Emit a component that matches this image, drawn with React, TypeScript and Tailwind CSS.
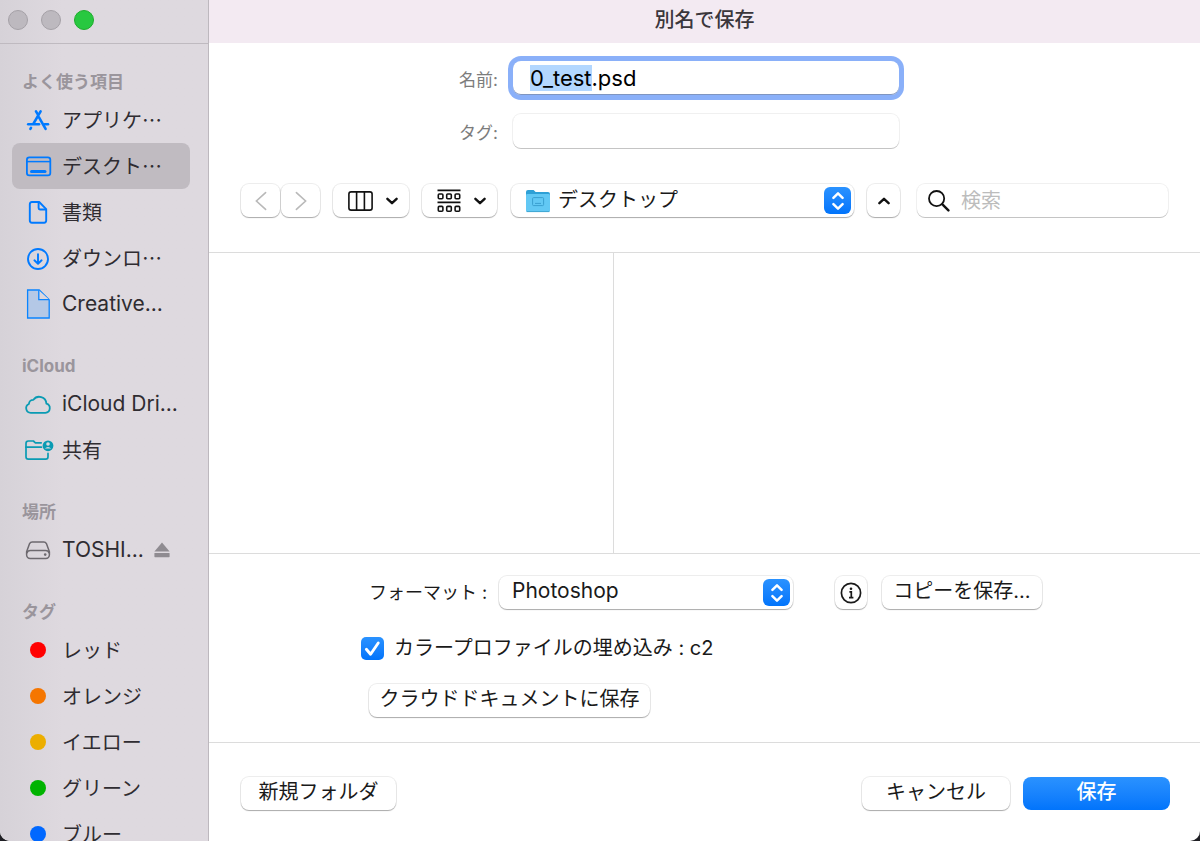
import { useEffect, useRef, type ReactNode } from 'react';

interface SidebarItem {
  label: string;
  icon: ReactNode;
  latin?: boolean;
  selected?: boolean;
  ejectable?: boolean;
}

interface SidebarSection {
  title: string;
  items: SidebarItem[];
}

const jp = "font-['Noto_Sans_CJK_JP',sans-serif]";
const ui = "font-['Inter','Noto_Sans_CJK_JP',sans-serif]";

const controlShadow =
  'rounded-lg bg-white shadow-[0_0_0_1px_rgba(0,0,0,0.07),0_1px_1px_rgba(0,0,0,0.28)]';
const fieldShadow =
  'rounded-lg bg-white shadow-[0_0_0_1px_rgba(0,0,0,0.06),0_1px_0_rgba(0,0,0,0.18)]';

function AppsIcon() {
  return (
    <svg viewBox="0 0 28 30" className="w-7 h-[30px]" fill="none" stroke="#007aff" strokeWidth="2.6" strokeLinecap="round">
      <path d="M12 6.4 L13.8 9.4" />
      <path d="M16.6 6.4 L9.6 18.4" />
      <path d="M15 12.4 L21.6 23.8" />
      <path d="M4.2 19.2 H15" />
      <path d="M20.6 19.2 H24" />
      <path d="M7 22.8 L6.4 23.8" />
    </svg>
  );
}

function DesktopIcon() {
  return (
    <svg viewBox="0 0 28 30" className="w-7 h-[30px]" fill="none" stroke="#007aff" strokeWidth="1.8">
      <rect x="2.9" y="6.4" width="23.4" height="18" rx="2.4" />
      <path d="M3 10.6 H26" strokeWidth="1.5" />
      <path d="M7.5 20.4 H21" strokeWidth="3" strokeLinecap="round" />
    </svg>
  );
}

function DocumentIcon() {
  return (
    <svg viewBox="0 0 28 30" className="w-7 h-[30px]" fill="none" stroke="#007aff" strokeWidth="1.9" strokeLinejoin="round">
      <path d="M8 5 H15.2 L22.2 12.1 V23.5 A2.3 2.3 0 0 1 20 25.8 H8 A2.3 2.3 0 0 1 5.8 23.5 V7.3 A2.3 2.3 0 0 1 8 5 Z" />
      <path d="M14.6 5.3 V11.1 Q14.6 12.5 16 12.5 H22" />
    </svg>
  );
}

function DownloadIcon() {
  return (
    <svg viewBox="0 0 28 30" className="w-7 h-[30px]" fill="none" stroke="#007aff" strokeWidth="1.9" strokeLinecap="round" strokeLinejoin="round">
      <circle cx="14" cy="16" r="10" />
      <path d="M14 11.1 V20.5 M10.4 17.3 L14 20.8 L17.6 17.3" />
    </svg>
  );
}

function FileIcon() {
  return (
    <svg viewBox="0 0 28 30" className="w-7 h-[30px]" fill="#b4c8e6" stroke="#0a84ff" strokeWidth="1.3">
      <path d="M3.6 1 H15.2 L25.2 10.8 V29 H3.6 Z" />
      <path d="M14.8 1.2 V10.6 H25" fill="#dcd8de" />
    </svg>
  );
}

function CloudIcon() {
  return (
    <svg viewBox="0 0 28 30" className="w-7 h-[30px]" fill="none" stroke="#0a9bb3" strokeWidth="1.8" strokeLinejoin="round">
      <path d="M6.8 23.8 H21.4 A4.7 4.7 0 0 0 22.4 14.6 A7.2 7.2 0 0 0 9.4 10.8 A4.4 4.4 0 0 0 4.9 15 A4.6 4.6 0 0 0 6.8 23.8 Z" />
    </svg>
  );
}

function SharedIcon() {
  return (
    <svg viewBox="0 0 30 30" className="w-[30px] h-[30px] -mr-0.5 shrink-0" fill="none" stroke="#0a9bb3" strokeWidth="1.7" strokeLinejoin="round" strokeLinecap="round">
      <path d="M17.2 7.8 H11.4 L9.4 6 H4.4 A2.4 2.4 0 0 0 2 8.4 V21.8 A2.4 2.4 0 0 0 4.4 24.2 H21.6 A2.4 2.4 0 0 0 24 21.8 V18.4" />
      <path d="M2 12.2 H17.4" />
      <circle cx="24" cy="10.8" r="5.4" fill="#0a9bb3" stroke="none" />
      <circle cx="24" cy="9" r="1.8" fill="#dcd8de" stroke="none" />
      <path d="M20.8 13.6 Q24 10.2 27.2 13.6 Z" fill="#dcd8de" stroke="none" />
    </svg>
  );
}

function DiskIcon() {
  return (
    <svg viewBox="0 0 28 30" className="w-7 h-[30px]" fill="none" stroke="#6d696f" strokeWidth="1.5" strokeLinejoin="round">
      <path d="M8.2 7 H19.8 Q21.6 7 22.4 8.6 L25.4 16.8 V19.8 A3.6 3.6 0 0 1 21.8 23.4 H6.2 A3.6 3.6 0 0 1 2.6 19.8 V16.8 L5.6 8.6 Q6.4 7 8.2 7 Z" />
      <path d="M2.8 18.2 Q3.6 15.6 6.4 15.6 H21.6 Q24.4 15.6 25.2 18.2" />
      <circle cx="21.2" cy="19.6" r="1.3" fill="#6d696f" stroke="none" />
    </svg>
  );
}

function EjectIcon() {
  return (
    <svg viewBox="0 0 16 16" className="ml-auto mr-5 w-4 h-4" fill="#8f8b91">
      <path d="M8 0.5 L15.6 9.5 H0.4 Z" />
      <rect x="0.4" y="11" width="15.2" height="4.2" rx="0.6" />
    </svg>
  );
}

function Chevron({ className = '' }: { className?: string }) {
  return (
    <svg viewBox="0 0 12 8" className={`w-3 h-2 ${className}`} fill="none" stroke="#111" strokeWidth="2.4" strokeLinecap="round" strokeLinejoin="round">
      <path d="M1.4 1.8 L6 6.2 L10.6 1.8" />
    </svg>
  );
}

function Stepper() {
  return (
    <span className="pointer-events-none absolute right-[3px] top-[3px] flex w-[27px] h-[27px] items-center justify-center rounded-md bg-gradient-to-b from-[#2a92ff] to-[#0174fb]">
      <svg viewBox="0 0 14 20" className="w-3.5 h-5" fill="none" stroke="#fff" strokeWidth="2.5" strokeLinecap="round" strokeLinejoin="round">
        <path d="M2.4 6.8 L7 2.4 L11.6 6.8" />
        <path d="M2.4 13.2 L7 17.6 L11.6 13.2" />
      </svg>
    </span>
  );
}

function FolderIcon() {
  return (
    <svg viewBox="0 0 26 24" className="pointer-events-none absolute left-3.5 top-[5px] w-[26px] h-6">
      <path d="M1 3 Q1 1 3 1 H8.6 L10.6 3 H23 Q25 3 25 5 V8 H1 Z" fill="#2ea0d6" />
      <rect x="1" y="5" width="24" height="18" rx="1.4" fill="#62c8f4" />
      <path d="M1.6 22.6 H24.4" stroke="#3fa6d2" strokeWidth="1" />
      <rect x="7.6" y="8.6" width="11" height="8" rx="1" fill="none" stroke="#3a9fd0" />
      <path d="M10 14.4 H16" stroke="#3a9fd0" />
    </svg>
  );
}

function TagDot({ className }: { className: string }) {
  return <span className={`w-4 h-4 rounded-full ${className}`} />;
}

const sections: SidebarSection[] = [
  {
    title: 'よく使う項目',
    items: [
      { label: 'アプリケ…', icon: <AppsIcon /> },
      { label: 'デスクト…', icon: <DesktopIcon />, selected: true },
      { label: '書類', icon: <DocumentIcon /> },
      { label: 'ダウンロ…', icon: <DownloadIcon /> },
      { label: 'Creative...', icon: <FileIcon />, latin: true },
    ],
  },
  {
    title: 'iCloud',
    items: [
      { label: 'iCloud Dri...', icon: <CloudIcon />, latin: true },
      { label: '共有', icon: <SharedIcon /> },
    ],
  },
  {
    title: '場所',
    items: [{ label: 'TOSHI...', icon: <DiskIcon />, latin: true, ejectable: true }],
  },
  {
    title: 'タグ',
    items: [
      { label: 'レッド', icon: <TagDot className="bg-[#ff0000]" /> },
      { label: 'オレンジ', icon: <TagDot className="bg-[#f57600]" /> },
      { label: 'イエロー', icon: <TagDot className="bg-[#ecae00]" /> },
      { label: 'グリーン', icon: <TagDot className="bg-[#00b300]" /> },
      { label: 'ブルー', icon: <TagDot className="bg-[#0068ff]" /> },
    ],
  },
];

function Sidebar() {
  return (
    <aside className="flex w-[209px] shrink-0 flex-col overflow-hidden border-r border-[#bdb8be] bg-gradient-to-r from-[#d6d2d8] to-[#ded9df] to-30%">
      <div className="flex h-11 shrink-0 items-start gap-[13px] border-b border-[#bfbac0] pl-2 pt-2.5">
        <button aria-label="閉じる" className="w-5 h-5 rounded-full border border-[#a5a1a7] bg-[#bdb9bf]" />
        <button aria-label="しまう" className="w-5 h-5 rounded-full border border-[#a5a1a7] bg-[#bdb9bf]" />
        <button aria-label="拡大" className="w-5 h-5 rounded-full border border-[#1eac2c] bg-[#28c840]" />
      </div>
      <nav className="-mt-px">
        {sections.map((section) => (
          <section key={section.title}>
            <h2 className={`flex h-[54px] items-end pb-[3px] pl-[22px] text-[17px] font-bold leading-6 text-[#9a959c] ${ui}`}>
              {section.title}
            </h2>
            <ul>
              {section.items.map((item) => (
                <li key={item.label} className="flex items-center">
                  <button
                    className={`ml-3 mr-[18px] flex h-[46px] flex-1 items-center gap-2.5 rounded-lg pl-3 text-left text-[#2f2c31] ${
                      item.selected ? 'bg-[#c0bbc1]' : ''
                    }`}
                  >
                    <span className="flex w-7 shrink-0 items-center justify-center">{item.icon}</span>
                    <span className={`whitespace-nowrap leading-7 ${item.latin ? `text-[21px] ${ui}` : `text-[20px] ${jp}`}`}>
                      {item.label}
                    </span>
                    {item.ejectable && <EjectIcon />}
                  </button>
                </li>
              ))}
            </ul>
          </section>
        ))}
      </nav>
    </aside>
  );
}

function NameFields() {
  const nameRef = useRef<HTMLInputElement>(null);

  // Select the base name and leave the extension alone
  useEffect(() => {
    const input = nameRef.current;
    if (!input) return;
    input.focus();
    input.setSelectionRange(0, input.value.lastIndexOf('.'));
  }, []);

  return (
    <div className="grid grid-cols-[1fr_386px_1fr] items-center gap-x-[15px] gap-y-[19px] pl-[3px] pt-[18px]">
      <label htmlFor="name" className="pt-[3px] text-right text-[17px] leading-6 text-[#7c7c7c]">
        名前:
      </label>
      <input
        id="name"
        ref={nameRef}
        defaultValue="0_test.psd"
        className="h-[34px] rounded-lg bg-white pl-[17px] text-[22px] leading-7 text-black shadow-[0_0_0_5px_#8ab0f9,inset_0_-1px_0_#7f95c0] outline-none selection:bg-[#b3d7ff] selection:text-black"
      />
      <span />
      <label htmlFor="tags" className="pt-[3px] text-right text-[17px] leading-6 text-[#7c7c7c]">
        タグ:
      </label>
      <input id="tags" className={`h-[34px] px-4 text-xl outline-none ${fieldShadow}`} />
    </div>
  );
}

function Toolbar() {
  return (
    <div className="mt-9 flex h-[33px] items-center pl-8 pr-8">
      <button aria-label="戻る" className={`flex h-full w-[39px] items-center justify-center ${controlShadow}`}>
        <svg viewBox="0 0 12 20" className="w-3 h-5" fill="none" stroke="#b9b9b9" strokeWidth="1.6" strokeLinecap="round">
          <path d="M10.6 1.6 L1.4 10 L10.6 18.4" />
        </svg>
      </button>
      <button aria-label="進む" className={`ml-px flex h-full w-[39px] items-center justify-center ${controlShadow}`}>
        <svg viewBox="0 0 12 20" className="w-3 h-5" fill="none" stroke="#b9b9b9" strokeWidth="1.6" strokeLinecap="round">
          <path d="M1.4 1.6 L10.6 10 L1.4 18.4" />
        </svg>
      </button>
      <button aria-label="表示" className={`ml-[13px] flex h-full w-[76px] items-center justify-between pl-[15px] pr-[11px] ${controlShadow}`}>
        <svg viewBox="0 0 25 20" className="w-[25px] h-5" fill="none" stroke="#111" strokeWidth="1.6">
          <rect x="0.9" y="0.9" width="23.2" height="18.2" rx="2.2" />
          <path d="M8.6 1 V19 M16.4 1 V19" />
        </svg>
        <Chevron />
      </button>
      <button aria-label="グループ" className={`ml-[13px] flex h-full w-[75px] items-center justify-between pl-[15px] pr-[11px] ${controlShadow}`}>
        <svg viewBox="0 0 24 24" className="w-6 h-6" fill="none" stroke="#111" strokeWidth="1.6">
          <path d="M0.5 1.4 H23.5 M0.5 13.4 H23.5" />
          <rect x="1.3" y="5" width="4.6" height="4.8" rx="1" />
          <rect x="9.7" y="5" width="4.6" height="4.8" rx="1" />
          <rect x="18.1" y="5" width="4.6" height="4.8" rx="1" />
          <rect x="1.3" y="17.4" width="4.6" height="4.8" rx="1" />
          <rect x="9.7" y="17.4" width="4.6" height="4.8" rx="1" />
          <rect x="18.1" y="17.4" width="4.6" height="4.8" rx="1" />
        </svg>
        <Chevron />
      </button>
      <div className={`relative ml-[14px] h-full w-[343px] ${controlShadow}`}>
        <FolderIcon />
        <select aria-label="場所" className={`h-full w-full appearance-none bg-transparent pb-[3px] pl-[47px] text-xl leading-7 text-[#1a1a1a] outline-none ${jp}`}>
          <option>デスクトップ</option>
        </select>
        <Stepper />
      </div>
      <button aria-label="折りたたむ" className={`ml-[13px] flex h-full w-[33px] items-center justify-center ${controlShadow}`}>
        <Chevron className="rotate-180" />
      </button>
      <div className={`relative ml-[17px] h-full min-w-0 flex-1 ${fieldShadow}`}>
        <svg viewBox="0 0 22 22" className="pointer-events-none absolute left-[11px] top-1.5 w-[22px] h-[22px]" fill="none" stroke="#111" strokeLinecap="round">
          <circle cx="8.6" cy="8.6" r="7.6" strokeWidth="1.8" />
          <path d="M14.4 14.4 L20.4 20.4" strokeWidth="2.4" />
        </svg>
        <input
          type="search"
          aria-label="検索"
          placeholder="検索"
          className="h-full w-full bg-transparent pl-11 pr-3 text-xl leading-7 outline-none placeholder:text-[#bcbcbc]"
        />
      </div>
    </div>
  );
}

function FormatOptions() {
  return (
    <div className="flex flex-col items-start border-b border-[#dcdcdc] pb-[25px] pl-[152px] pt-[22px] text-xl leading-7 text-[#1a1a1a]">
      <div className="flex items-center pl-2">
        <label htmlFor="format" className="w-[130px] text-lg leading-6">
          フォーマット :
        </label>
        <div className={`relative h-[33px] w-[294px] ${controlShadow}`}>
          <select id="format" className="h-full w-full appearance-none bg-transparent pb-[3px] pl-[13px] text-[21px] leading-7 outline-none">
            <option>Photoshop</option>
          </select>
          <Stepper />
        </div>
        <button aria-label="情報" className={`ml-[42px] flex w-8 h-[33px] items-center justify-center ${controlShadow}`}>
          <svg viewBox="0 0 22 22" className="w-[22px] h-[22px]" fill="none" stroke="#1a1a1a" strokeWidth="1.7">
            <circle cx="11" cy="11" r="9.6" />
            <circle cx="11" cy="6.8" r="1.3" fill="#1a1a1a" stroke="none" />
            <path d="M9.4 9.8 H11.3 V15.4 M9 15.6 H13.4" />
          </svg>
        </button>
        <button className={`ml-[15px] h-[33px] w-40 pb-[3px] ${controlShadow}`}>コピーを保存...</button>
      </div>
      <label className="mt-[25px] flex items-center gap-2.5">
        <span className="relative flex">
          <input
            type="checkbox"
            defaultChecked
            className="h-[23px] w-[23px] appearance-none rounded-[5px] bg-gradient-to-b from-[#2a92ff] to-[#0174fb]"
          />
          <svg viewBox="0 0 24 24" className="pointer-events-none absolute inset-0 h-[23px] w-[23px]" fill="none" stroke="#fff" strokeWidth="3" strokeLinecap="round" strokeLinejoin="round">
            <path d="M5.6 12.8 L10 18 L18 6.2" />
          </svg>
        </span>
        カラープロファイルの埋め込み : c2
      </label>
      <button className={`ml-2 mt-[22px] h-[33px] w-[281px] pb-[3px] ${controlShadow}`}>クラウドドキュメントに保存</button>
    </div>
  );
}

function FooterButtons() {
  return (
    <div className="flex h-[98px] shrink-0 items-start pl-8 pr-[30px] pt-[34px] text-xl leading-7 text-[#1a1a1a]">
      <button className={`h-[33px] w-[155px] pb-[3px] ${controlShadow}`}>新規フォルダ</button>
      <button className={`ml-auto h-[33px] w-[148px] pb-[3px] ${controlShadow}`}>キャンセル</button>
      <button className="ml-[13px] h-[33px] w-[147px] rounded-lg bg-gradient-to-b from-[#2a92ff] to-[#0174fb] pb-[3px] font-medium text-white">
        保存
      </button>
    </div>
  );
}

export default function App() {
  return (
    <div className="h-screen bg-[#1f1f24]">
      <div lang="ja" className={`flex h-full overflow-hidden rounded-b-[10px] bg-white ${ui}`}>
        <Sidebar />
        <main className="flex min-w-0 flex-1 flex-col">
          <h1 className="flex h-[43px] shrink-0 items-center justify-center bg-[#f3eaf2] pb-1 text-xl font-medium leading-7 text-[#3a363b]">
            別名で保存
          </h1>
          <NameFields />
          <Toolbar />
          <div className="mt-[35px] flex min-h-0 flex-1 border-y border-[#dcdcdc]">
            <div className="w-[405px] border-r border-[#dcdcdc]" />
            <div className="flex-1" />
          </div>
          <FormatOptions />
          <FooterButtons />
        </main>
      </div>
    </div>
  );
}
